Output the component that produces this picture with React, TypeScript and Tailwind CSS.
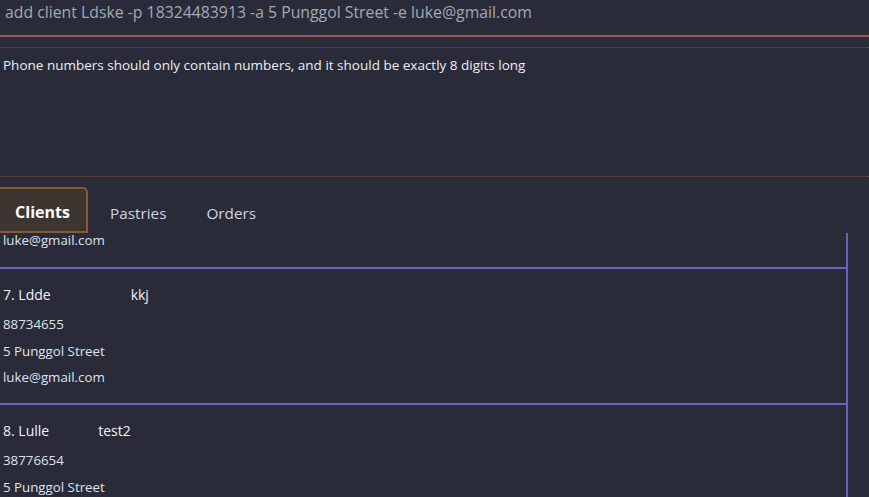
import React from "react";

const font = { fontFamily: '"Open Sans", "Noto Sans", sans-serif' };

type Client = { idx: number; name: string; tag: string; tagGap: string; phone: string; addr: string; email: string };

const clients: Client[] = [
  { idx: 7, name: "Ldde", tag: "kkj", tagGap: "ml-[80px]", phone: "88734655", addr: "5 Punggol Street", email: "luke@gmail.com" },
  { idx: 8, name: "Lulle", tag: "test2", tagGap: "ml-[49px]", phone: "38776654", addr: "5 Punggol Street", email: "luke@gmail.com" },
];

function Card({ c }: { c: Client }) {
  return (
    <div className="h-[136px] border-b-2 border-[#6b5fc4] pl-[3px] pt-[14px]">
      <div className="flex h-[22px] items-center text-[14px] text-[#eef2f8]">
        <span>{c.idx}. {c.name}</span>
        <span className={c.tagGap}>{c.tag}</span>
      </div>
      <div className="mt-[6px] flex flex-col text-[13.3px] leading-[26.5px] text-[#dde3ec]">
        <span>{c.phone}</span>
        <span>{c.addr}</span>
        <span>{c.email}</span>
      </div>
    </div>
  );
}

export default function App() {
  return (
    <div className="h-[497px] w-[869px] overflow-hidden bg-[#292c38]" style={font}>
      <div className="flex h-[37px] items-start border-b-2 border-[#a4574c] pl-[5px] pt-[1px]">
        <span className="text-[15.8px] leading-[22px] text-[#a3a8b2]">
          add client Ldske -p 18324483913 -a 5 Punggol Street -e luke@gmail.com
        </span>
      </div>
      <div className="mt-[10px] border-t border-dotted border-[#6e5140]" />
      <div className="h-[128px] pl-[3px] pt-[7px] text-[13.5px] leading-[20px] text-[#eaeef5]">
        Phone numbers should only contain numbers, and it should be exactly 8 digits long
      </div>
      <div className="border-t border-dotted border-[#6e5140]" />
      <div className="flex h-[56px] items-end pt-[10px]">
        <div className="-ml-[3px] flex h-[46px] w-[91px] items-center justify-center rounded-tr-[5px] border-2 border-[#8a5a28] bg-[#3d3530] pt-[3px] text-[16px] font-bold text-white">
          Clients
        </div>
        <div className="flex h-[46px] items-center pl-[22px] pt-[6px] text-[15.3px] text-[#cdd5e3]">Pastries</div>
        <div className="flex h-[46px] items-center pl-[40px] pt-[6px] text-[15.3px] text-[#cdd5e3]">Orders</div>
      </div>
      <div className="w-[848px] border-r-2 border-[#6b5fc4]">
        <div className="h-[36px] border-b-2 border-[#6b5fc4] pl-[3px] text-[13.3px] leading-[14px] text-[#dde3ec]">
          luke@gmail.com
        </div>
        {clients.map((c) => (
          <Card key={c.idx} c={c} />
        ))}
      </div>
    </div>
  );
}
